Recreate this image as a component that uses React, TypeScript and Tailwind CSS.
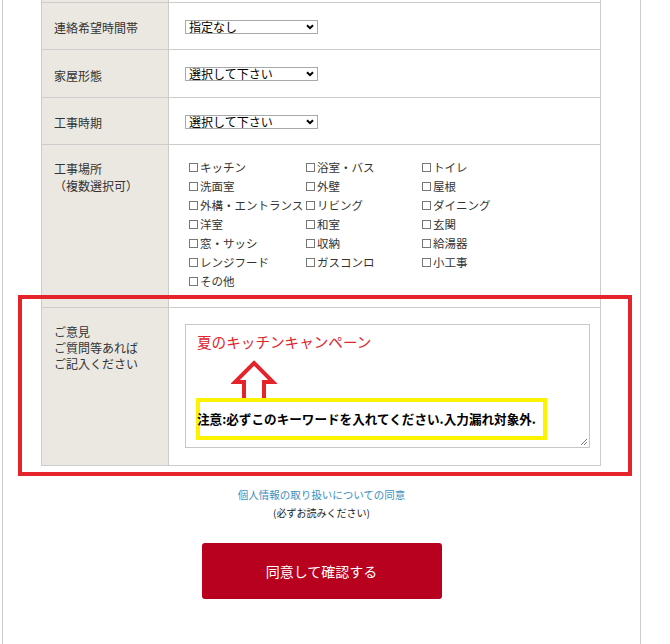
const FONT = { fontFamily: '"Noto Sans CJK JP", "Noto Sans", sans-serif' }

const PLACES = [
  'キッチン', '浴室・バス', 'トイレ',
  '洗面室', '外壁', '屋根',
  '外構・エントランス', 'リビング', 'ダイニング',
  '洋室', '和室', '玄関',
  '窓・サッシ', '収納', '給湯器',
  'レンジフード', 'ガスコンロ', '小工事',
  'その他',
]

function FakeSelect({ value }: { value: string }) {
  return (
    <div className="flex items-center justify-between w-[133px] h-[14px] border border-[#a9a9a9] bg-white pl-[3px] pr-[3px] text-[12px] leading-none text-black">
      <span>{value}</span>
      <svg width="8" height="6" viewBox="0 0 8 6">
        <path d="M1 1.2 L4 4.2 L7 1.2" fill="none" stroke="#000" strokeWidth="2" />
      </svg>
    </div>
  )
}

function Row({ label, h, top, children, align = 'center' }: { label: React.ReactNode; h: string; top?: boolean; children: React.ReactNode; align?: 'center' | 'start' }) {
  return (
    <div className={`flex border-b border-[#ccc] ${top ? 'border-t' : ''} ${h}`}>
      <div className={`w-[127px] shrink-0 bg-[#ebe8e1] border-r border-[#ccc] pl-[12px] text-[12px] text-[#333] ${align === 'center' ? 'flex items-center pt-[4px]' : ''}`}>
        {label}
      </div>
      <div className={`flex-1 pl-[16px] ${align === 'center' ? 'flex items-center pt-[1px]' : ''}`}>{children}</div>
    </div>
  )
}

export default function App() {
  return (
    <div className="relative h-[644px] overflow-hidden bg-white" style={FONT}>
      <div className="ml-[2px] w-[639px] h-[644px] border-l border-r border-[#ccc]">
        <div className="ml-[38px] w-[560px] border-l border-r border-[#ccc]">
          {/* tail of the row above */}
          <div className="flex h-[2px]">
            <div className="w-[127px] bg-[#ebe8e1] border-r border-[#ccc]" />
            <div className="flex-1" />
          </div>

          <Row label="連絡希望時間帯" h="h-[48px]" top>
            <FakeSelect value="指定なし" />
          </Row>
          <Row label="家屋形態" h="h-[48px]">
            <FakeSelect value="選択して下さい" />
          </Row>
          <Row label="工事時期" h="h-[47px]">
            <FakeSelect value="選択して下さい" />
          </Row>

          <Row
            h="h-[163px]"
            align="start"
            label={
              <div className="pt-[15px] leading-[17px]">
                <p>工事場所</p>
                <p>（複数選択可）</p>
              </div>
            }
          >
            <div className="grid grid-cols-[117px_116px_116px] pt-[13px] pl-[4px] text-[11.5px] leading-[19px] text-[#333]">
              {PLACES.map(p => (
                <label key={p} className="flex items-center whitespace-nowrap">
                  <span className="inline-block w-[9px] h-[9px] border border-[#777] mr-[2px] shrink-0" />
                  {p}
                </label>
              ))}
            </div>
          </Row>

          <Row
            h="h-[158px]"
            align="start"
            label={
              <div className="pt-[16px] leading-[16px]">
                <p>ご意見</p>
                <p>ご質問等あれば</p>
                <p>ご記入ください</p>
              </div>
            }
          >
            <div className="pt-[16px]">
              <div className="relative w-[405px] h-[124px] border border-[#c8c8c8] bg-white pl-[11px] pt-[7px]">
                <p className="text-[14.6px] leading-[20px] text-[#e0242c]">夏のキッチンキャンペーン</p>

                {/* up arrow annotation */}
                <svg className="absolute left-[45px] top-[35px]" width="46" height="45" viewBox="0 0 46 45">
                  <path d="M23 3 L42 22 L33 22 L33 45 L13 45 L13 22 L4 22 Z" fill="#fff" stroke="#e4232a" strokeWidth="4" strokeLinejoin="miter" />
                </svg>

                {/* yellow highlight */}
                <div className="absolute left-[10px] top-[73px] w-[351px] h-[42px] border-[4px] border-[#fdf200] bg-white" />
                <p className="absolute left-[11px] top-[84px] text-[12.6px] leading-[20px] font-bold text-black whitespace-nowrap">
                  注意:必ずこのキーワードを入れてください.入力漏れ対象外.
                </p>

                <svg className="absolute right-[1px] bottom-[1px]" width="9" height="9" viewBox="0 0 9 9">
                  <path d="M8 2 L2 8 M8 5 L5 8" stroke="#777" strokeWidth="1" />
                </svg>
              </div>
            </div>
          </Row>
        </div>

        <div className="mt-[20px] text-center">
          <p className="text-[10.5px] leading-[18px] text-[#3a8fbf]">個人情報の取り扱いについての同意</p>
          <p className="text-[10px] leading-[18px] text-[#222]">(必ずお読みください)</p>
        </div>

        <div className="flex justify-center mt-[21px]">
          <button className="w-[240px] h-[56px] rounded-[3px] bg-[#b8001f] text-white text-[14px]">同意して確認する</button>
        </div>
      </div>

      {/* red annotation frame */}
      <div className="absolute left-[18px] top-[295px] w-[614px] h-[181px] border-[4px] border-[#e4232a]" />
    </div>
  )
}
